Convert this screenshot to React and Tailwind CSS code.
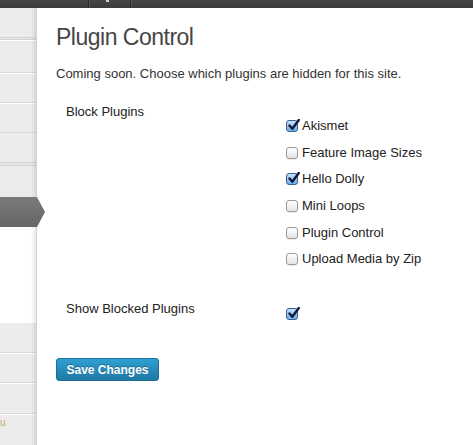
import { useState } from "react";

const plugins = [
  { name: "Akismet", on: true },
  { name: "Feature Image Sizes", on: false },
  { name: "Hello Dolly", on: true },
  { name: "Mini Loops", on: false },
  { name: "Plugin Control", on: false },
  { name: "Upload Media by Zip", on: false },
];

function Box({ checked, onClick }) {
  return (
    <span
      onClick={onClick}
      className={
        "relative inline-block h-[12px] w-[12px] shrink-0 rounded-[3px] border " +
        (checked
          ? "border-[#3d5f8f] bg-gradient-to-b from-[#c4e2fb] to-[#6aaee9]"
          : "border-[#9a9a9a] bg-gradient-to-b from-white to-[#e4e4e4] shadow-[0_1px_0_rgba(0,0,0,0.08)]")
      }
    >
      {checked && (
        <svg className="absolute left-[1px] top-[-2px]" width="12" height="12" viewBox="0 0 12 12">
          <path d="M1.5 6.5 L4.3 9.8 L10.8 1" fill="none" stroke="#14193a" strokeWidth="2.4" strokeLinecap="round" strokeLinejoin="round" />
        </svg>
      )}
    </span>
  );
}

function MenuItem({ h }) {
  return <div className={`${h} border-t border-white border-b border-b-[#d9d9d9] bg-[#ececec]`} />;
}

export default function App() {
  const [list, setList] = useState(plugins);
  const [show, setShow] = useState(true);

  return (
    <div className="flex h-[445px] w-[473px] flex-col overflow-hidden bg-white font-['Liberation_Sans',Arial,sans-serif]">
      <div className="flex h-[8px] shrink-0 bg-gradient-to-b from-[#464646] to-[#3a3a3a]">
        <div className="w-[89px] border-r border-[#2b2b2b]" />
        <div className="relative w-[42px] border-r border-l border-[#2b2b2b] border-l-[#525252]">
          <div className="ml-[16px] h-[2px] w-[3px] bg-[#cfcfcf]" />
        </div>
        <div className="flex-1 border-l border-[#525252]" />
      </div>

      <div className="flex flex-1">
        <div className="relative flex w-[37px] shrink-0 flex-col border-r border-[#d2d2d2] bg-[#ececec]">
          <div className="h-[29px] bg-[#ececec]" />
          <div className="h-[3px] border-y border-[#d4d4d4] bg-[#e4e4e4]" />
          <MenuItem h="h-[33px]" />
          <MenuItem h="h-[30px]" />
          <MenuItem h="h-[30px]" />
          <div className="h-[29px] bg-[#ececec]" />
          <div className="h-[4px] border-y border-[#d4d4d4] bg-[#e6e6e6]" />
          <div className="h-[31px] bg-[#ececec]" />
          <div className="relative z-10 h-[30px] w-[45px] bg-gradient-to-b from-[#7a7a7a] to-[#666] [clip-path:polygon(0_0,37px_0,45px_50%,37px_100%,0_100%)]" />
          <div className="h-[95px] bg-white" />
          <MenuItem h="h-[31px]" />
          <MenuItem h="h-[30px]" />
          <MenuItem h="h-[31px]" />
          <div className="flex-1 border-t border-white bg-[#ececec]">
            <span className="block pt-[2px] text-[10px] leading-[11px] text-[#c9a680]">u</span>
          </div>
          <div className="pointer-events-none absolute inset-y-0 right-0 w-[5px] bg-gradient-to-r from-transparent to-[rgba(0,0,0,0.09)]" />
        </div>

        <div className="flex-1 pl-[19px] text-[13px] leading-[18px] text-[#333]">
          <h2 className="mt-[15px] text-[23px] font-normal leading-[29px] tracking-[-0.5px] text-[#464646]">
            Plugin Control
          </h2>
          <p className="mt-[13px]">Coming soon. Choose which plugins are hidden for this site.</p>

          <div className="mt-[20px] flex">
            <div className="w-[230px] pl-[10px] text-[#222]">Block Plugins</div>
            <div className="flex flex-col gap-[8.7px] pt-[14px]">
              {list.map((p, i) => (
                <label key={p.name} className="flex h-[18px] items-center gap-[4px] text-[#222]">
                  <Box
                    checked={p.on}
                    onClick={() => setList(list.map((q, j) => (j === i ? { ...q, on: !q.on } : q)))}
                  />
                  {p.name}
                </label>
              ))}
            </div>
          </div>

          <div className="mt-[32px] flex">
            <div className="w-[230px] pl-[10px] text-[#222]">Show Blocked Plugins</div>
            <div className="flex pt-[8px]">
              <Box checked={show} onClick={() => setShow(!show)} />
            </div>
          </div>

          <button className="mt-[38px] h-[23px] w-[103px] rounded-[3px] border border-[#1c6f95] bg-gradient-to-b from-[#2fa0d3] to-[#1f79a3] text-[12px] font-bold text-white [text-shadow:0_-1px_0_rgba(0,0,0,0.3)]">
            Save Changes
          </button>
        </div>
      </div>
    </div>
  );
}
